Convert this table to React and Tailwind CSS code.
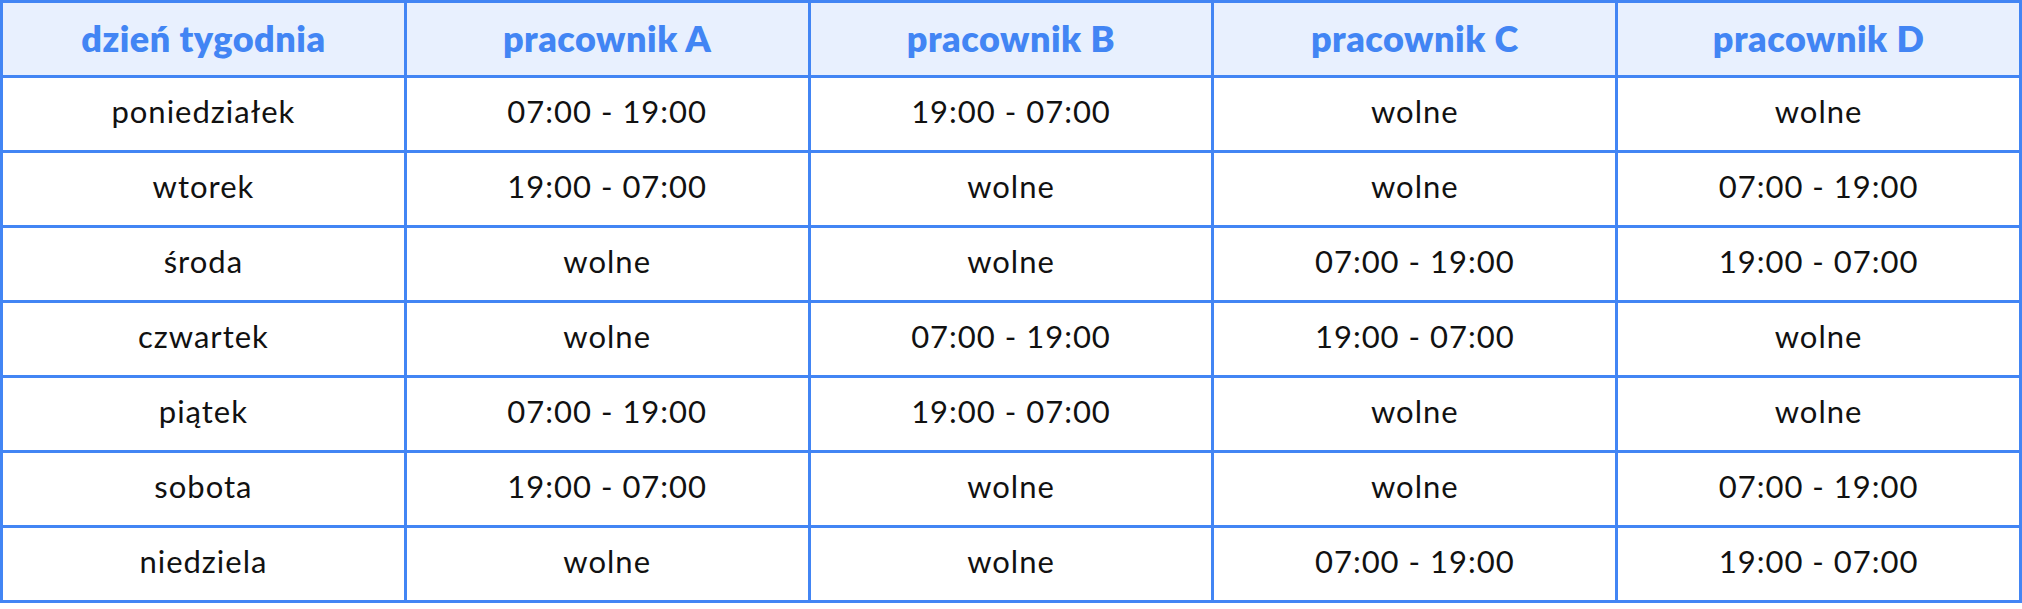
const columns = ["dzień tygodnia", "pracownik A", "pracownik B", "pracownik C", "pracownik D"];

const rows = [
  ["poniedziałek", "07:00 - 19:00", "19:00 - 07:00", "wolne", "wolne"],
  ["wtorek", "19:00 - 07:00", "wolne", "wolne", "07:00 - 19:00"],
  ["środa", "wolne", "wolne", "07:00 - 19:00", "19:00 - 07:00"],
  ["czwartek", "wolne", "07:00 - 19:00", "19:00 - 07:00", "wolne"],
  ["piątek", "07:00 - 19:00", "19:00 - 07:00", "wolne", "wolne"],
  ["sobota", "19:00 - 07:00", "wolne", "wolne", "07:00 - 19:00"],
  ["niedziela", "wolne", "wolne", "07:00 - 19:00", "19:00 - 07:00"],
];

const App = () => {
  return (
    <div className="w-[2022px] h-[609px] bg-white" style={{ fontFamily: "Lato, 'Noto Sans', sans-serif" }}>
      <div className="grid grid-cols-5 gap-[3px] bg-[#4285f4] p-[3px]">
        {columns.map((col) => (
          <div
            key={col}
            className="flex h-[72px] items-center justify-center bg-[#e8f0fe] pb-[2px] text-[36px] font-extrabold tracking-[0.5px] text-[#4285f4]"
          >
            {col}
          </div>
        ))}
        {rows.map((row) =>
          row.map((cell, i) => (
            <div
              key={row[0] + i}
              className="flex h-[72px] items-center justify-center bg-white pb-[5px] text-[31px] tracking-[1px] text-[#111111]"
            >
              {cell}
            </div>
          ))
        )}
      </div>
    </div>
  );
};

export default App;
